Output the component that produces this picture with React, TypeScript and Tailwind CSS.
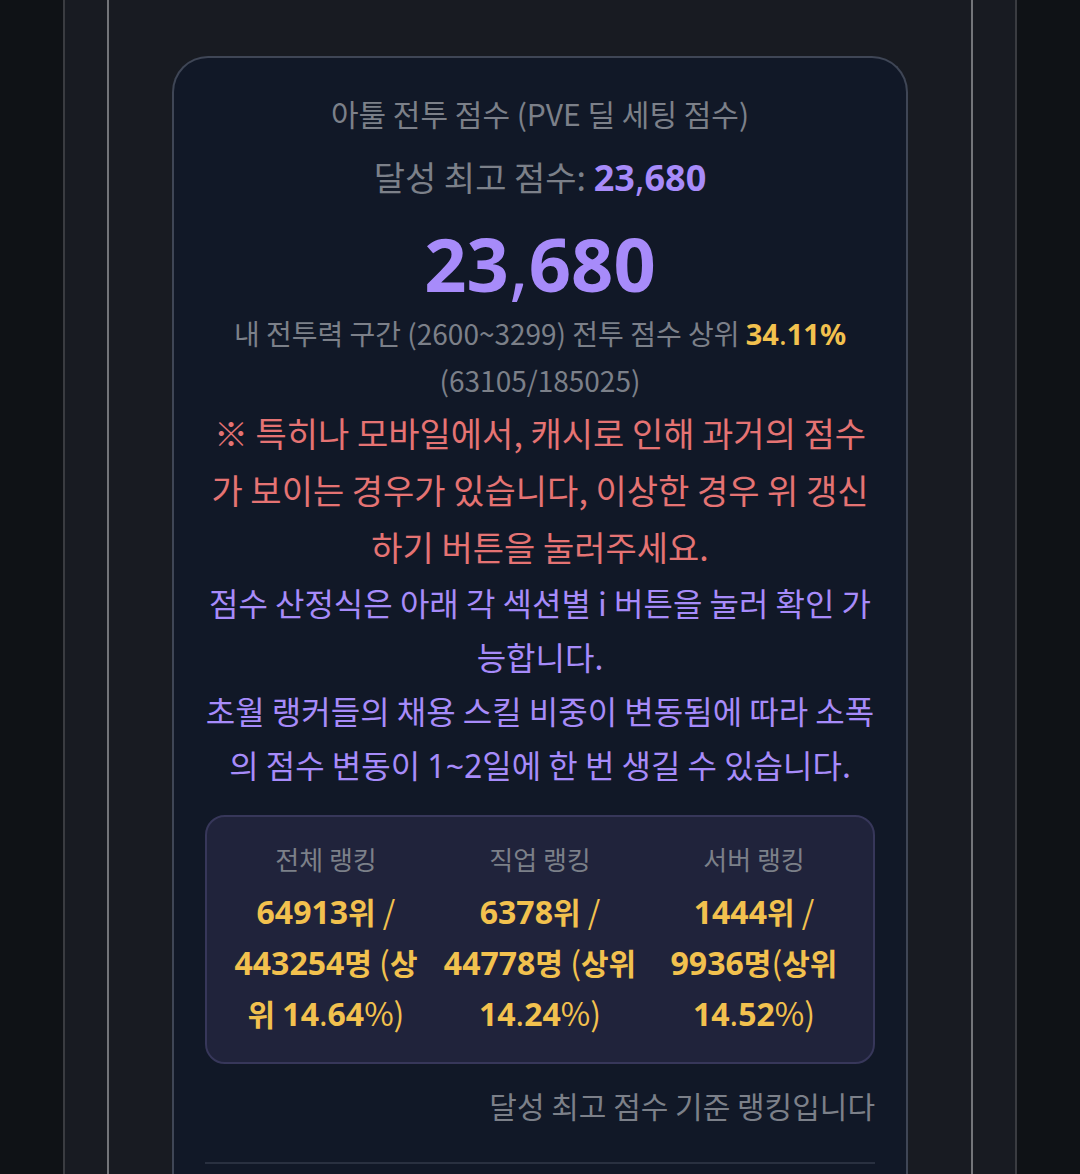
type Ranking = {
  label: string;
  value: string;
};

const rankings: Ranking[] = [
  { label: "전체 랭킹", value: "64913위 / 443254명 (상위 14.64%)" },
  { label: "직업 랭킹", value: "6378위 / 44778명 (상위 14.24%)" },
  { label: "서버 랭킹", value: "1444위 / 9936명(상위 14.52%)" },
];

// digits are set in Noto Sans, punctuation stays in the regular weight
const StrongText = ({ text }: { text: string }) => {
  const parts = text.match(/[0-9]+|[가-힣]+|[.,]|[^0-9가-힣.,]+/g) ?? [];

  return (
    <>
      {parts.map((part, index) => {
        if (/[0-9]/.test(part)) {
          return (
            <span
              key={index}
              className="font-['Noto_Sans'] leading-none font-bold"
            >
              {part}
            </span>
          );
        }
        if (/[.,]/.test(part)) {
          return (
            <span key={index} className="font-['Noto_Sans'] leading-none">
              {part}
            </span>
          );
        }
        if (/[가-힣]/.test(part)) {
          return (
            <span key={index} className="text-[30px] leading-none font-bold">
              {part}
            </span>
          );
        }
        return part;
      })}
    </>
  );
};

const RankingBox = () => {
  return (
    <dl className="mt-6 grid grid-cols-3 gap-4 rounded-[20px] border-2 border-[#37375a] bg-[#20233b] px-5 pt-5 pb-6">
      {rankings.map((ranking) => (
        <div key={ranking.label} className="flex flex-col gap-1">
          <dt className="text-[26px] leading-[44px] text-[#7c8089]">
            {ranking.label}
          </dt>
          <dd className="text-[32px] leading-[51px] text-[#f2c14e]">
            <StrongText text={ranking.value} />
          </dd>
        </div>
      ))}
    </dl>
  );
};

const App = () => {
  return (
    <div className="flex min-h-screen flex-col bg-[#0f1216] px-[63px] font-['Noto_Sans_CJK_KR',sans-serif]">
      <div className="flex grow flex-col border-x-2 border-[#3a3c41] bg-[#181b22] px-[42px]">
        <main className="flex grow flex-col border-x-2 border-[#73757a] px-[63px] pt-14">
          <section className="grow rounded-t-[36px] border-2 border-b-0 border-[#3f4656] bg-[#111827] px-[31px] pt-[30px] text-center text-[#7c8089]">
            <h2 className="text-[30px] leading-[50px]">
              아툴 전투 점수 (PVE 딜 세팅 점수)
            </h2>
            <p className="mt-[10px] text-[34px] leading-[57px]">
              달성 최고 점수:{" "}
              <span className="text-[36px] leading-none text-[#a78bfa]">
                <StrongText text="23,680" />
              </span>
            </p>
            <p className="mt-2 text-[74px] leading-[94px] text-[#a78bfa]">
              <StrongText text="23,680" />
            </p>
            <p className="mt-[3px] text-[28px] leading-[47px]">
              내 전투력 구간 (2600~3299) 전투 점수 상위{" "}
              <span className="text-[29px] leading-none text-[#f2c14e]">
                <StrongText text="34.11" />
                <span className="font-['Noto_Sans'] font-bold">%</span>
              </span>
              <br />
              (63105/185025)
            </p>
            <p className="text-[34px] leading-[57px] text-[#e57373]">
              ※ 특히나 모바일에서, 캐시로 인해 과거의 점수가 보이는 경우가
              있습니다, 이상한 경우 위 갱신하기 버튼을 눌러주세요.
            </p>
            <div className="text-[32px] leading-[54px] text-[#a78bfa]">
              <p>
                점수 산정식은 아래 각 섹션별 i 버튼을 눌러 확인 가능합니다.
              </p>
              <p>
                초월 랭커들의 채용 스킬 비중이 변동됨에 따라 소폭의 점수 변동이{" "}
                <span className="font-['Noto_Sans'] leading-none">1~2</span>
                일에 한 번 생길 수 있습니다.
              </p>
            </div>
            <RankingBox />
            <p className="mt-4 border-b-2 border-[#293040] pb-8 text-right text-[30px] leading-[50px]">
              달성 최고 점수 기준 랭킹입니다
            </p>
          </section>
        </main>
      </div>
    </div>
  );
};

export default App;
